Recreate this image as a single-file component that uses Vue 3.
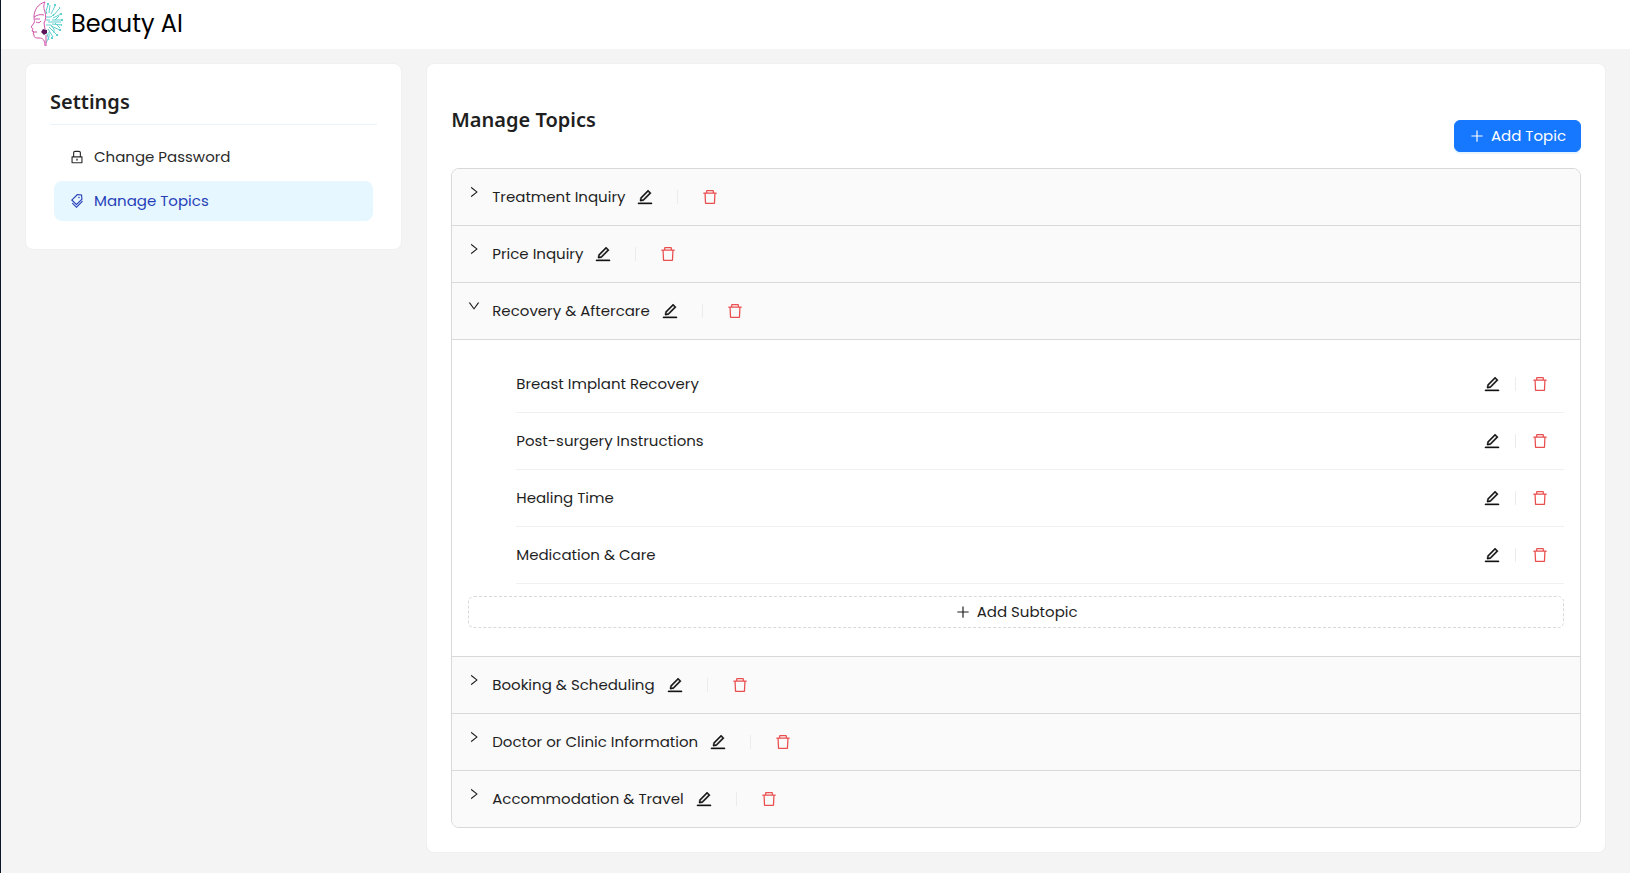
<script setup>
import { ref } from 'vue'

const icons = {
  lock: 'M832 464h-68V240c0-70.7-57.3-128-128-128H388c-70.7 0-128 57.3-128 128v224h-68c-17.7 0-32 14.3-32 32v384c0 17.7 14.3 32 32 32h640c17.7 0 32-14.3 32-32V496c0-17.7-14.3-32-32-32zM332 240c0-30.9 25.1-56 56-56h248c30.9 0 56 25.1 56 56v224H332V240zm460 600H232V536h560v304zM484 701v53c0 4.4 3.6 8 8 8h40c4.4 0 8-3.6 8-8v-53a48.01 48.01 0 10-56 0z',
  tags: 'M483.2 790.3L861.4 412c1.7-1.7 2.5-4 2.3-6.3l-25.5-301.4c-.7-7.8-6.8-13.9-14.6-14.6L522.2 64.3c-2.3-.2-4.7.6-6.3 2.3L137.7 444.8a8.03 8.03 0 000 11.3l334.2 334.2c3.1 3.2 8.2 3.2 11.3 0zm62.6-651.7l224.6 19 19 224.6L477.5 694 233.9 450.5l311.9-311.9zm60.16 186.23a48 48 0 1067.88-67.89 48 48 0 10-67.88 67.89zM889.7 539.8l-39.6-39.5a8.03 8.03 0 00-11.3 0l-362 361.3-237.6-237a8.03 8.03 0 00-11.3 0l-39.6 39.5a8.03 8.03 0 000 11.3l243.2 242.8 39.6 39.5c3.1 3.1 8.2 3.1 11.3 0l407.3-406.6c3.1-3.1 3.1-8.2 0-11.3z',
  edit: 'M257.7 752c2 0 4-.2 6-.5L431.9 722c2-.4 3.9-1.3 5.3-2.8l423.9-423.9a9.96 9.96 0 000-14.1L694.9 114.9c-1.9-1.9-4.4-2.9-7.1-2.9s-5.2 1-7.1 2.9L256.8 538.8c-1.5 1.5-2.4 3.3-2.8 5.3l-29.5 168.2a33.5 33.5 0 009.4 29.8c6.6 6.4 14.9 9.9 23.8 9.9zm67.4-174.4L687.8 215l73.3 73.3-362.7 362.6-88.9 15.7 15.6-89zM880 836H144c-17.7 0-32 14.3-32 32v36c0 4.4 3.6 8 8 8h784c4.4 0 8-3.6 8-8v-36c0-17.7-14.3-32-32-32z',
  trash: 'M360 184h-8c4.4 0 8-3.6 8-8v8h304v-8c0 4.4 3.6 8 8 8h-8v72h72v-80c0-35.3-28.7-64-64-64H352c-35.3 0-64 28.7-64 64v80h72v-72zm504 72H160c-17.7 0-32 14.3-32 32v32c0 4.4 3.6 8 8 8h60.4l24.7 523c1.6 34.1 29.8 61 63.9 61h454c34.2 0 62.3-26.8 63.9-61l24.7-523H888c4.4 0 8-3.6 8-8v-32c0-17.7-14.3-32-32-32zM731.3 840H292.7l-24.2-512h487l-24.2 512z',
  plus: 'M482 152h60q8 0 8 8v704q0 8-8 8h-60q-8 0-8-8V160q0-8 8-8zM192 474h672q8 0 8 8v60q0 8-8 8H160q-8 0-8-8v-60q0-8 8-8z',
  right: 'M765.7 486.8L314.9 134.7A7.97 7.97 0 00302 141v77.3c0 4.9 2.3 9.6 6.1 12.6l360 281.1-360 281.1c-3.9 3-6.1 7.7-6.1 12.6V883c0 6.7 7.7 10.4 12.9 6.3l450.8-352.1a31.96 31.96 0 000-50.4z',
  down: 'M884 256h-75c-5.1 0-9.9 2.5-12.9 6.6L512 654.2 227.9 262.6c-3-4.1-7.8-6.6-12.9-6.6h-75c-6.5 0-10.3 7.4-6.5 12.7l352.6 486.1c12.8 17.6 39 17.6 51.7 0l352.6-486.1c3.9-5.3.1-12.7-6.4-12.7z'
}

const menu = [
  { label: 'Change Password', icon: 'lock' },
  { label: 'Manage Topics', icon: 'tags', active: true }
]

const topics = [
  { name: 'Treatment Inquiry', subtopics: [] },
  { name: 'Price Inquiry', subtopics: [] },
  {
    name: 'Recovery & Aftercare',
    subtopics: ['Breast Implant Recovery', 'Post-surgery Instructions', 'Healing Time', 'Medication & Care']
  },
  { name: 'Booking & Scheduling', subtopics: [] },
  { name: 'Doctor or Clinic Information', subtopics: [] },
  { name: 'Accommodation & Travel', subtopics: [] }
]

const openIndex = ref(2)
const toggle = (i) => {
  openIndex.value = openIndex.value === i ? -1 : i
}
</script>

<template>
  <div class="page">
    <header class="topbar">
      <svg class="logo" viewBox="0 0 32 46" fill="none" aria-hidden="true">
        <g stroke="#5fd0d0" stroke-width="1">
          <path d="M15 10l2-6M18 12l1-8M20 13l4-8M22 15l6-7M22 17l8-4M21 19h10M17 21h13M21 23l10 1M20 25l9 4M18 26l8 8M17 28l5 8M15 30l3 9M15 16h5l3-3M15 19h4M15 24h5l3 4v4M16 13l-1-3M18 31v5l-3 6M24 19l4-4M24 22l5 5" />
          <path d="M16 3h2M23 4h2M28 7h1M30 12v2M31 18v2M30 24h1M28 29h2M25 34h2M21 36v2" stroke-width="2" />
        </g>
        <g stroke="#cf52a8" stroke-width="1" stroke-linejoin="round">
          <path d="M14 1C7 3 3 9 3 16c0 3 1 4 0 6l-3 4c0 1 2 1 2 2l-1 2 2 1-1 1 1 2c0 3 2 3 5 3 4 0 6 2 6 8" />
          <path d="M14 1c-2 4-1 7 0 10s1 8-1 11" />
          <path d="M3 16c3-2 6-3 10-2M5 21c2 1 4 1 5-1M4 18h5M2 31h4M13 22l1 6M15 34v11" />
        </g>
        <path d="M10 31l2-3 4 1v3l-3 2z" fill="#5b1458" />
      </svg>
      <span class="brand">Beauty AI</span>
    </header>

    <div class="columns">
      <aside class="side-col">
        <div class="card">
          <h2 class="side-title">Settings</h2>
          <nav class="menu">
            <a
              v-for="item in menu"
              :key="item.label"
              href="#"
              class="menu-item"
              :class="{ active: item.active }"
            >
              <svg class="icon-sm" viewBox="0 0 1024 1024"><path :d="icons[item.icon]" /></svg>
              <span>{{ item.label }}</span>
            </a>
          </nav>
        </div>
      </aside>

      <main class="main-col">
        <div class="card">
          <div class="main-head">
            <h2 class="main-title">Manage Topics</h2>
            <button type="button" class="btn btn-primary">
              <svg class="icon-sm" viewBox="0 0 1024 1024"><path :d="icons.plus" /></svg>
              <span>Add Topic</span>
            </button>
          </div>

          <div class="collapse">
            <section v-for="(topic, i) in topics" :key="topic.name" class="panel">
              <div class="panel-head">
                <button
                  type="button"
                  class="arrow"
                  :aria-expanded="openIndex === i"
                  :aria-label="'Toggle ' + topic.name"
                  @click="toggle(i)"
                >
                  <svg viewBox="0 0 1024 1024"><path :d="openIndex === i ? icons.down : icons.right" /></svg>
                </button>
                <span class="topic-name">{{ topic.name }}</span>
                <button type="button" class="icon-btn edit" :aria-label="'Edit ' + topic.name">
                  <svg viewBox="0 0 1024 1024"><path :d="icons.edit" /></svg>
                </button>
                <span class="divider wide"></span>
                <button type="button" class="icon-btn danger" :aria-label="'Delete ' + topic.name">
                  <svg viewBox="0 0 1024 1024"><path :d="icons.trash" /></svg>
                </button>
              </div>

              <div v-if="openIndex === i" class="panel-body">
                <ul class="subtopics">
                  <li v-for="sub in topic.subtopics" :key="sub" class="subtopic">
                    <span class="sub-name">{{ sub }}</span>
                    <button type="button" class="icon-btn edit" :aria-label="'Edit ' + sub">
                      <svg viewBox="0 0 1024 1024"><path :d="icons.edit" /></svg>
                    </button>
                    <span class="divider"></span>
                    <button type="button" class="icon-btn danger" :aria-label="'Delete ' + sub">
                      <svg viewBox="0 0 1024 1024"><path :d="icons.trash" /></svg>
                    </button>
                  </li>
                </ul>
                <button type="button" class="btn btn-dashed">
                  <svg class="icon-sm" viewBox="0 0 1024 1024"><path :d="icons.plus" /></svg>
                  <span>Add Subtopic</span>
                </button>
              </div>
            </section>
          </div>
        </div>
      </main>
    </div>
  </div>
</template>

<style>
body {
  margin: 0;
  background: #f4f4f4;
}
</style>

<style scoped>
.page {
  box-sizing: border-box;
  min-height: 100vh;
  border-left: 1px solid #0b1727;
  background: #f4f4f4;
  color: #1f1f1f;
  font-family: Poppins, Inter, "Noto Sans", sans-serif;
  font-size: 15px;
  line-height: 22px;
}
svg {
  display: block;
  fill: currentColor;
}
button {
  font: inherit;
  color: inherit;
  cursor: pointer;
}
.topbar {
  display: flex;
  align-items: center;
  gap: 8px;
  box-sizing: border-box;
  height: 49px;
  padding: 0 30px 2px;
  background: #fff;
}
.logo {
  width: 32px;
  height: 46px;
  fill: none;
}
.brand {
  font-size: 24px;
  line-height: 32px;
  color: #000;
}
.columns {
  display: flex;
  align-items: flex-start;
  padding: 14px 12px 20px;
}
.side-col,
.main-col {
  box-sizing: border-box;
  padding: 0 12px;
}
.side-col {
  width: 25%;
}
.main-col {
  width: 75%;
}
.card {
  padding: 24px;
  background: #fff;
  border: 1px solid #f0f0f0;
  border-radius: 8px;
}
.side-title,
.main-title {
  margin: 0;
  font-family: "Noto Sans", sans-serif;
  font-size: 20px;
  font-weight: 600;
  line-height: 28px;
}
.side-title {
  padding-bottom: 8px;
  border-bottom: 1px solid #e9f3f9;
}
.menu {
  display: flex;
  flex-direction: column;
  gap: 4px;
  padding: 12px 4px 4px;
}
.menu-item {
  display: flex;
  align-items: center;
  gap: 9px;
  height: 40px;
  padding: 0 15px;
  border-radius: 8px;
  color: #2b2b2b;
  text-decoration: none;
}
.menu-item.active {
  background: #e6f7ff;
  color: #263fb8;
}
.icon-sm {
  flex: none;
  width: 16px;
  height: 16px;
}
.main-head {
  display: flex;
  justify-content: space-between;
  align-items: flex-end;
  padding-top: 18px;
  margin-bottom: 16px;
}
.main-title {
  align-self: flex-start;
  padding-bottom: 18px;
}
.btn {
  display: flex;
  align-items: center;
  justify-content: center;
  gap: 6px;
  box-sizing: border-box;
  height: 32px;
  padding: 0 14px;
  border-radius: 6px;
}
.btn-primary {
  border: 1px solid #1677ff;
  background: #1677ff;
  color: #fff;
  box-shadow: 0 2px 0 rgba(5, 145, 255, 0.1);
}
.btn-dashed {
  width: 100%;
  margin: 12px 0;
  border: 1px dashed #d9d9d9;
  background: #fff;
}
.collapse {
  overflow: hidden;
  border: 1px solid #d9d9d9;
  border-radius: 8px;
}
.panel + .panel {
  border-top: 1px solid #d9d9d9;
}
.panel-head {
  display: flex;
  align-items: center;
  padding: 12px 15px;
  background: #fafafa;
}
.arrow {
  align-self: flex-start;
  display: flex;
  align-items: center;
  height: 22px;
  margin-right: 11px;
  padding: 0;
  border: 0;
  background: none;
}
.arrow svg {
  width: 14px;
  height: 14px;
}
.topic-name {
  margin-right: 4px;
}
.icon-btn {
  display: flex;
  align-items: center;
  justify-content: center;
  width: 32px;
  height: 32px;
  padding: 0;
  border: 0;
  background: none;
}
.icon-btn svg {
  width: 18px;
  height: 18px;
}
.icon-btn.edit {
  color: #141414;
}
.icon-btn.edit path {
  stroke: currentColor;
  stroke-width: 20;
}
.icon-btn.danger {
  color: #ea4f50;
}
.divider {
  width: 1px;
  height: 14px;
  margin: 0 8px 0 7px;
  background: #ececec;
}
.divider.wide {
  margin: 0 16px;
}
.panel-body {
  padding: 16px;
  border-top: 1px solid #d9d9d9;
  background: #fff;
}
.subtopics {
  margin: 0;
  padding: 0 0 0 48px;
  list-style: none;
}
.subtopic {
  display: flex;
  align-items: center;
  padding: 12px 8px 12px 0;
  border-bottom: 1px solid #f0f0f0;
}
.sub-name {
  flex: 1;
}
</style>
